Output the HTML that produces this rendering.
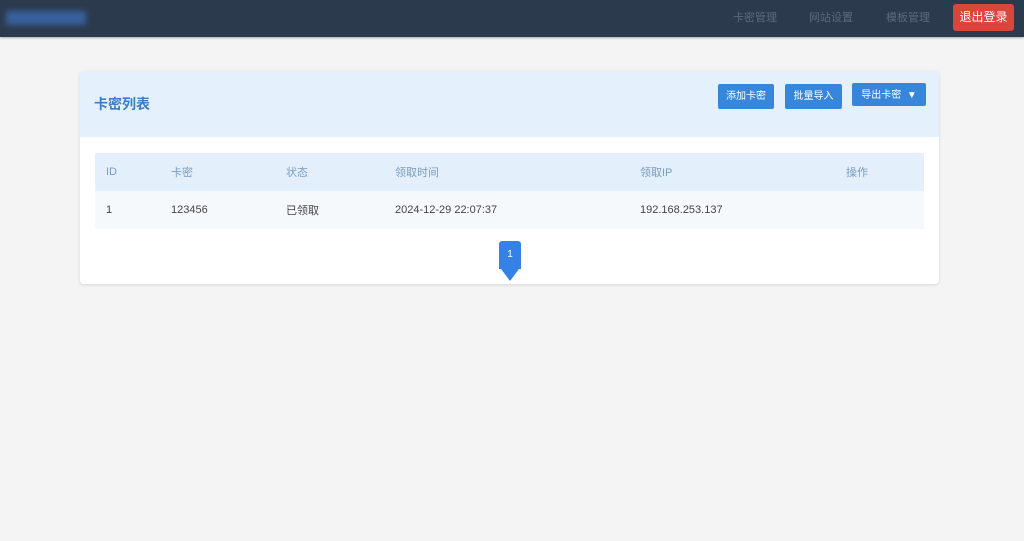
<!DOCTYPE html>
<html><head><meta charset="utf-8"><style>
*{margin:0;padding:0;box-sizing:border-box}
body{width:1024px;height:541px;background:#f4f4f4;font-family:"Liberation Sans","Noto Sans CJK SC",sans-serif;position:relative;overflow:hidden}
.nav{position:absolute;left:0;top:0;width:1024px;height:37px;background:#2c3a4e;box-shadow:0 1px 2px rgba(0,0,0,.3)}
.logo{position:absolute;left:6px;top:11px;width:80px;height:14px;background:#3b6ab0;filter:blur(3px);opacity:.8}
.nl{position:absolute;top:9px;font-size:11px;color:#5d6a7c}
.out{position:absolute;left:953px;top:4px;width:61px;height:27px;background:#d9463a;border-radius:3px;color:#fff;font-size:12px;text-align:center;line-height:27px}
.card{position:absolute;left:80px;top:71px;width:859px;height:213px;background:#fff;border-radius:4px;box-shadow:0 1px 3px rgba(0,0,0,.12);overflow:hidden}
.hd{height:66px;background:#e4f1fc}
.ti{position:absolute;left:14px;top:23px;font-size:14px;font-weight:bold;color:#3d7cc4}
.b{position:absolute;top:12px;height:25px;background:#3686dc;color:#fff;font-size:10px;text-align:center;line-height:25px;border-radius:2px}
table{position:absolute;left:15px;top:82px;width:829px;border-collapse:collapse;font-size:11px}
th{height:38px;background:#e3f0fb;color:#7a9cbf;font-weight:normal;text-align:left;padding-left:11px}
td{height:38px;background:#f6f9fc;color:#444;padding-left:11px}
.pg{position:absolute;left:419px;top:170px;width:22px;height:28px;background:#3582e6;border-radius:3px 3px 0 0;color:#fff;font-size:10px;text-align:center;line-height:28px}
.tri{position:absolute;left:421px;top:198px;border-left:9px solid transparent;border-right:9px solid transparent;border-top:12px solid #3582e6}
</style></head><body>
<div class="nav"><div class="logo"></div>
<span class="nl" style="left:733px">卡密管理</span><span class="nl" style="left:809px">网站设置</span><span class="nl" style="left:886px">模板管理</span>
<div class="out">退出登录</div></div>
<div class="card"><div class="hd"></div><div class="ti">卡密列表</div>
<div class="b" style="left:638px;width:56px;top:13px">添加卡密</div>
<div class="b" style="left:705px;width:57px;top:13px">批量导入</div>
<div class="b" style="left:772px;width:74px;top:12px;height:23px">导出卡密 &nbsp;▼</div>
<table><tr><th style="width:65px">ID</th><th style="width:115px">卡密</th><th style="width:109px">状态</th><th style="width:245px">领取时间</th><th style="width:206px">领取IP</th><th>操作</th></tr>
<tr><td>1</td><td>123456</td><td>已领取</td><td>2024-12-29 22:07:37</td><td>192.168.253.137</td><td></td></tr></table>
<div class="pg">1</div><div class="tri"></div></div>
</body></html>
